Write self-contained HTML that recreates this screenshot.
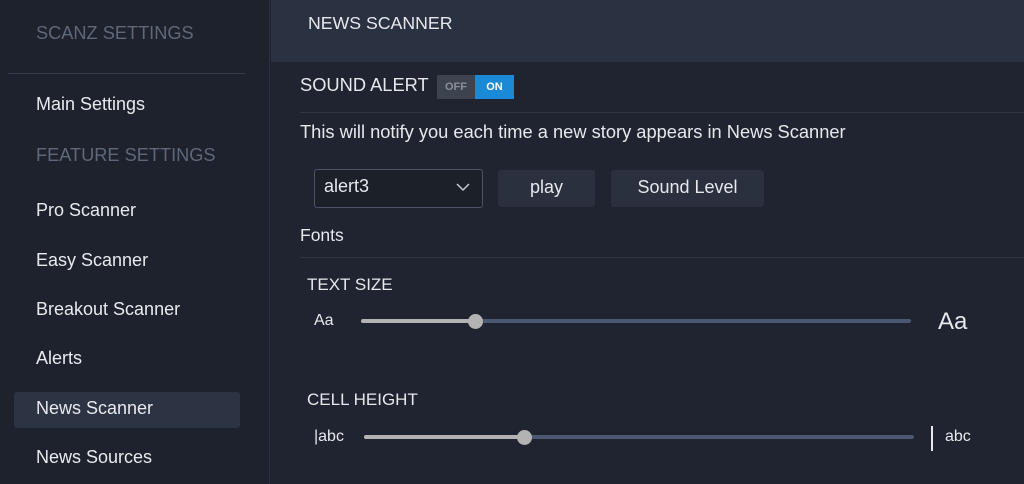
<!DOCTYPE html>
<html><head><style>
*{margin:0;padding:0;box-sizing:border-box}
body{width:1024px;height:484px;overflow:hidden;background:#1f2430;font-family:"Liberation Sans",sans-serif;color:#e6e8ec;position:relative}
.a{position:absolute;white-space:nowrap}
#side{position:absolute;left:0;top:0;width:270px;height:484px;background:#1d222c;border-right:1px solid #2a303c}
.h{color:#5f6879;font-size:18.2px}
.it{font-size:18px;color:#e8eaee;left:36px}
.btn{position:absolute;background:#2a303d;border-radius:3px;font-size:17px;text-align:center}
.tr{position:absolute;height:4px;border-radius:2px;background:#4a5873}
.fl{position:absolute;height:4px;border-radius:2px;background:#b3b3b3}
.kn{position:absolute;width:15px;height:15px;border-radius:50%;background:#b3b3b3}
</style></head><body>
<div id="side">
<div class="a h" style="left:36px;top:23px">SCANZ SETTINGS</div>
<div class="a" style="left:8px;top:73px;width:237px;height:1px;background:#333a47"></div>
<div class="a it" style="top:94px">Main Settings</div>
<div class="a h" style="left:36px;top:145px">FEATURE SETTINGS</div>
<div class="a it" style="top:200px">Pro Scanner</div>
<div class="a it" style="top:250px">Easy Scanner</div>
<div class="a it" style="top:299px">Breakout Scanner</div>
<div class="a it" style="top:348px">Alerts</div>
<div class="a" style="left:14px;top:392px;width:226px;height:36px;background:#2c3342;border-radius:3px"></div>
<div class="a it" style="top:398px">News Scanner</div>
<div class="a it" style="top:447px">News Sources</div>
</div>
<div class="a" style="left:271px;top:0;width:753px;height:62px;background:#2a3140"></div>
<div class="a" style="left:308px;top:13px;font-size:17.7px">NEWS SCANNER</div>
<div class="a" style="left:300px;top:74px;font-size:18.3px">SOUND ALERT</div>
<div class="a" style="left:437px;top:75px;width:38px;height:24px;background:#3d434e;color:#8a909a;font-size:11px;font-weight:bold;text-align:center;line-height:24px">OFF</div>
<div class="a" style="left:475px;top:75px;width:39px;height:24px;background:#1a8ad6;color:#fff;font-size:11px;font-weight:bold;text-align:center;line-height:24px">ON</div>
<div class="a" style="left:300px;top:112px;width:724px;height:1px;background:#2f3542"></div>
<div class="a" style="left:300px;top:121px;font-size:18.3px">This will notify you each time a new story appears in News Scanner</div>
<div class="a" style="left:314px;top:169px;width:169px;height:39px;border:1px solid #4a5466;border-radius:3px;background:#1b2029"></div>
<div class="a" style="left:324px;top:176px;font-size:18px">alert3</div>
<svg class="a" style="left:456px;top:182px" width="14" height="10"><path d="M1 2 L7 8 L13 2" stroke="#c8ccd2" stroke-width="1.5" fill="none"/></svg>
<div class="btn" style="left:498px;top:170px;width:97px;height:37px;line-height:35px;font-size:18px">play</div>
<div class="btn" style="left:611px;top:170px;width:153px;height:37px;line-height:35px;font-size:18px">Sound Level</div>
<div class="a" style="left:300px;top:225px;font-size:17.5px">Fonts</div>
<div class="a" style="left:300px;top:257px;width:724px;height:1px;background:#2f3542"></div>
<div class="a" style="left:307px;top:275px;font-size:17px">TEXT SIZE</div>
<div class="a" style="left:314px;top:312px;font-size:16px">Aa</div>
<div class="tr" style="left:361px;top:319px;width:550px"></div>
<div class="fl" style="left:361px;top:319px;width:114px"></div>
<div class="kn" style="left:468px;top:314px"></div>
<div class="a" style="left:938px;top:308px;font-size:24px">Aa</div>
<div class="a" style="left:307px;top:390px;font-size:17px">CELL HEIGHT</div>
<div class="a" style="left:314px;top:428px;font-size:16px">|abc</div>
<div class="tr" style="left:364px;top:435px;width:550px"></div>
<div class="fl" style="left:364px;top:435px;width:160px"></div>
<div class="kn" style="left:517px;top:430px"></div>
<div class="a" style="left:931px;top:426px;width:2px;height:25px;background:#e6e8ec"></div>
<div class="a" style="left:945px;top:428px;font-size:16px">abc</div>
</body></html>
